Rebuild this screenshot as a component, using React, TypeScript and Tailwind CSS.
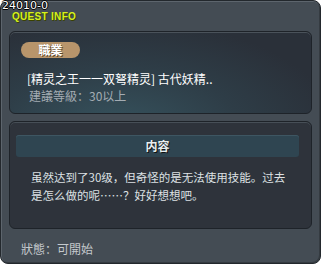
import React from "react";

const App = () => {
  return (
    <div className="h-[266px] w-[322px] bg-white font-['Noto_Sans_CJK_SC','Noto_Sans_CJK_TC',sans-serif]">
      <div className="relative flex h-[264px] w-[321px] flex-col rounded-[8px] border border-[#23282d] bg-[#444c54] shadow-[inset_1px_1px_0_#5d656d,inset_-1px_-1px_0_#353b41]">
        {/* quest id sits over the panel corner */}
        <div className="absolute left-[1px] top-[0px] font-['DejaVu_Sans',sans-serif] text-[11px] leading-[10px] text-white [text-shadow:1px_0_0_#000,-1px_0_0_#000,0_1px_0_#000,0_-1px_0_#000]">
          24010-0
        </div>
        <div className="ml-[11px] mt-[11px] font-['Liberation_Sans',Arial,sans-serif] text-[10px] font-bold leading-[10px] tracking-[0.3px] text-[#d6f21c] [text-shadow:1px_1px_0_#3a4200]">
          QUEST INFO
        </div>

        <div className="ml-[8px] mt-[9px] flex h-[83px] w-[303px] flex-col rounded-[6px] border border-[#1e2329] bg-[radial-gradient(ellipse_at_35%_120%,#36535e_0%,#2e3d47_45%,#2a3039_80%)] pl-[11px] pt-[10px] shadow-[inset_0_1px_0_#4a525a]">
          <div className="flex h-[16px] w-[59px] items-center justify-center rounded-full bg-[#b8956b] text-[12px] font-bold leading-none text-white [text-shadow:1px_1px_0_#5a4326]">
            職業
          </div>
          <div className="ml-[6px] mt-[12px] text-[12px] leading-[17px] text-white">
            [精灵之王一一双弩精灵] 古代妖精..
          </div>
          <div className="ml-[8px] text-[12px] leading-[17px] text-[#a4acb3]">
            建議等級：30以上
          </div>
        </div>

        <div className="ml-[8px] mt-[7px] flex h-[108px] w-[303px] flex-col rounded-[6px] border border-[#1e2329] bg-[#2e333b] pt-[13px] shadow-[inset_0_1px_0_#474f57]">
          <div className="ml-[6px] flex h-[22px] w-[283px] items-center justify-center rounded-[3px] bg-[#2f4551] text-[12px] font-bold text-[#e8eef0] shadow-[inset_0_1px_0_#3e5662] [text-shadow:1px_1px_0_#111]">
            内容
          </div>
          <div className="ml-[21px] mr-[16px] mt-[11px] text-[11.5px] leading-[18px] text-[#dde1e4]">
            虽然达到了30级，但奇怪的是无法使用技能。过去是怎么做的呢……？好好想想吧。
          </div>
        </div>

        <div className="ml-[20px] mt-[11px] text-[12px] leading-[17px] text-[#c4c9cd]">
          狀態：可開始
        </div>
      </div>
    </div>
  );
};

export default App;
